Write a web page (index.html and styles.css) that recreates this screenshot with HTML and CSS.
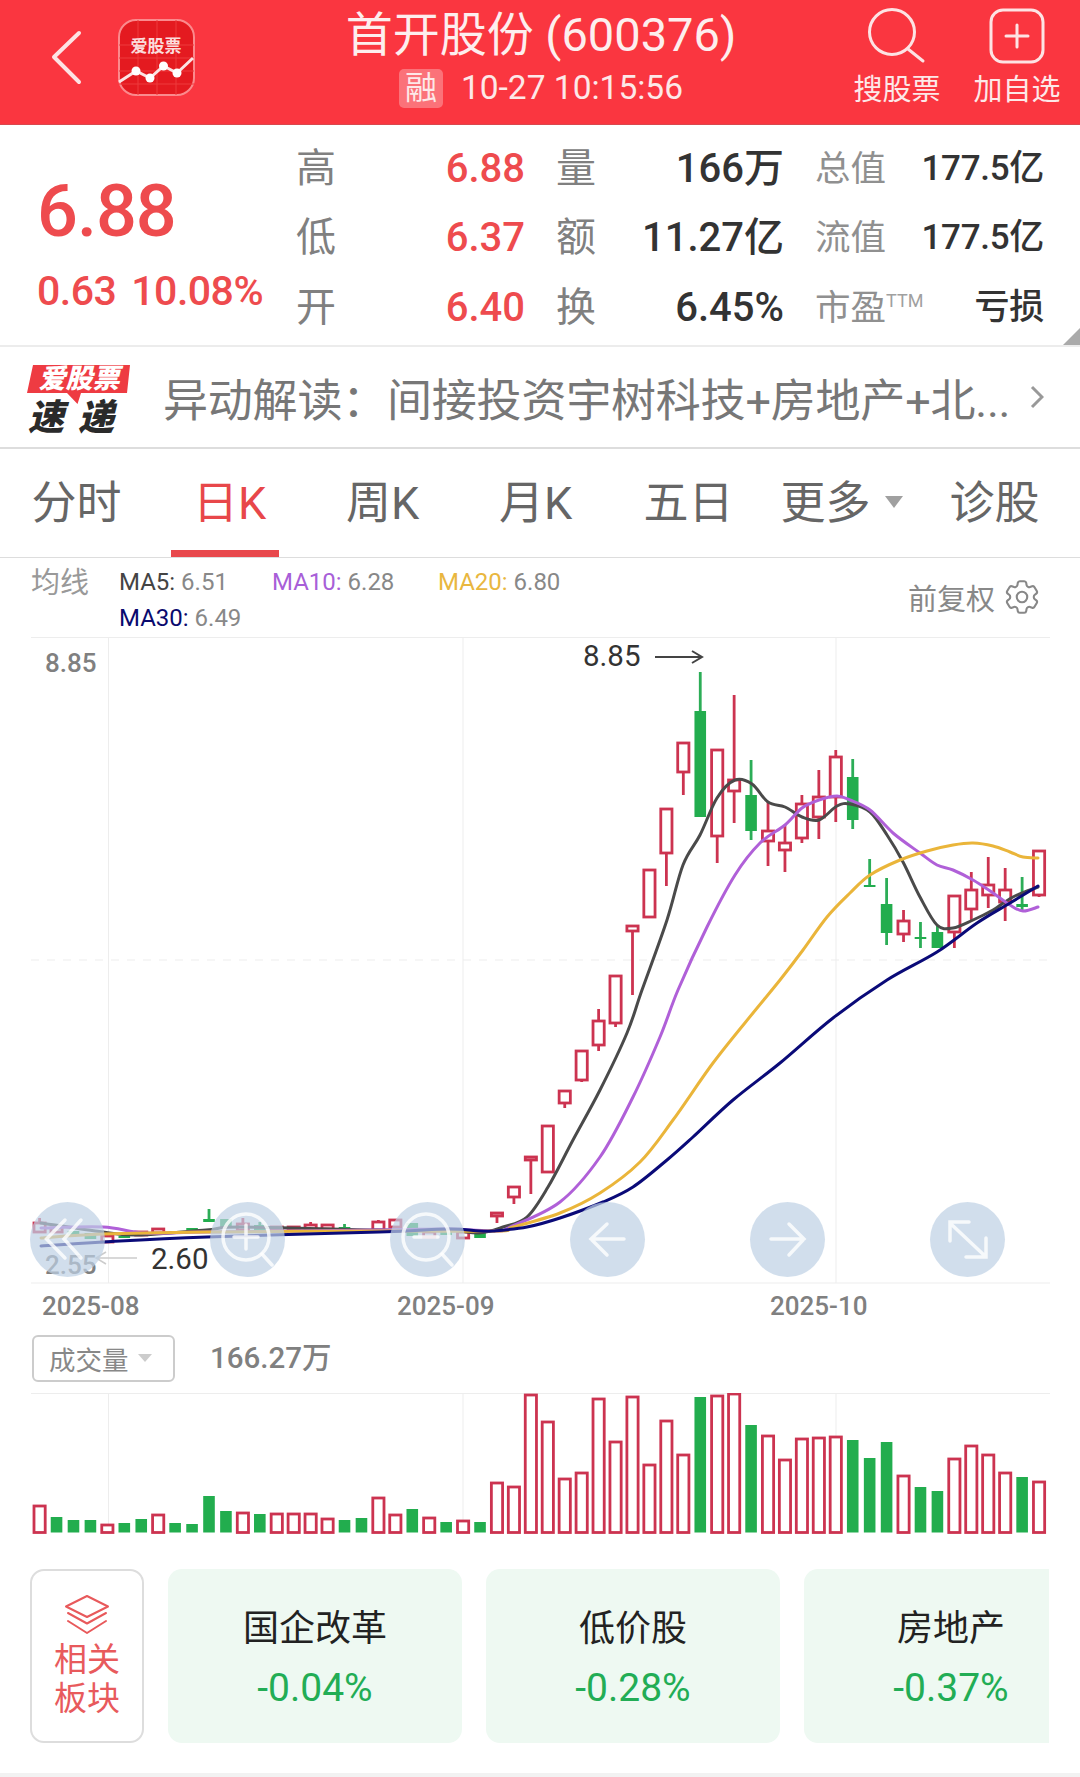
FILE: index.html
```html
<!DOCTYPE html>
<html lang="zh-CN">
<head>
    <meta charset="UTF-8">
    <meta name="viewport" content="width=device-width, initial-scale=1.0">
    <title>首开股份(600376)</title>
    <link rel="stylesheet" href="styles.css">
</head>
<body>
    <!-- Top bar -->
    <header class="topbar">
        <div class="topbar-left">
            <svg class="back-icon" viewBox="0 0 40 60"><path d="M32 5 L7 29 L32 54"/></svg>
            <svg class="app-logo" viewBox="118 19 77 77">
                <rect x="119" y="20" width="75" height="75" rx="17" class="app-logo-bg"/>
                <path d="M119 45H194M119 58H194M119 71H194M119 84H194M138 20V95M157 20V95M176 20V95" class="app-logo-grid"/>
                <text x="156" y="52" text-anchor="middle" class="app-logo-text">爱股票</text>
                <polyline points="119,82 136,71 150,78 163.5,66 177,73 193,58" class="app-logo-line"/>
                <circle cx="136" cy="71" r="4.5" fill="#fff"/>
                <circle cx="150" cy="78" r="4.5" fill="#fff"/>
                <circle cx="163.5" cy="66" r="4.5" fill="#fff"/>
                <circle cx="177" cy="73" r="4.5" fill="#fff"/>
            </svg>
        </div>
        <div class="topbar-title">
            <div class="stock-name">首开股份 (600376)</div>
            <div class="stock-time"><span class="rong-badge">融</span>10-27 10:15:56</div>
        </div>
        <div class="topbar-actions">
            <div class="action">
                <svg class="action-icon" viewBox="0 0 60 60"><circle cx="25" cy="26" r="22.5"/><path d="M41 43 L56 55"/></svg>
                <span>搜股票</span>
            </div>
            <div class="action">
                <svg class="action-icon" viewBox="0 0 60 60"><rect x="4" y="4" width="52" height="52" rx="12"/><path d="M30 19V41M19 30H41"/></svg>
                <span>加自选</span>
            </div>
        </div>
    </header>

    <!-- Quote -->
    <section class="quote">
        <div class="price-box">
            <div class="price">6.88</div>
            <div class="change"><span>0.63</span><span>10.08%</span></div>
        </div>
        <div class="stats">
            <div class="stat"><span class="stat-label">高</span><span class="stat-value up">6.88</span></div>
            <div class="stat"><span class="stat-label">量</span><span class="stat-value">166万</span></div>
            <div class="stat small"><span class="stat-label">总值</span><span class="stat-value">177.5亿</span></div>
            <div class="stat"><span class="stat-label">低</span><span class="stat-value up">6.37</span></div>
            <div class="stat"><span class="stat-label">额</span><span class="stat-value">11.27亿</span></div>
            <div class="stat small"><span class="stat-label">流值</span><span class="stat-value">177.5亿</span></div>
            <div class="stat"><span class="stat-label">开</span><span class="stat-value up">6.40</span></div>
            <div class="stat"><span class="stat-label">换</span><span class="stat-value">6.45%</span></div>
            <div class="stat small"><span class="stat-label">市盈<sup>TTM</sup></span><span class="stat-value">亏损</span></div>
        </div>
        <div class="corner"></div>
    </section>

    <!-- News -->
    <section class="news">
        <svg class="news-logo" viewBox="27 356 103 90">
            <polygon points="33,365 130,365 127,393 81,393 77.5,404 67,393 27,393" fill="#ee3b42"/>
            <text x="79" y="388" text-anchor="middle" class="news-logo-top">爱股票</text>
            <text x="28" y="430" class="news-logo-bottom">速</text>
            <text x="78" y="430" class="news-logo-bottom">递</text>
        </svg>
        <div class="news-text">异动解读<span class="news-colon">：</span>间接投资宇树科技+房地产+北...</div>
        <svg class="news-arrow" viewBox="0 0 14 24"><path d="M2 2 L12 12 L2 22"/></svg>
    </section>

    <!-- Period tabs -->
    <nav class="tabs">
        <div class="tab">分时</div>
        <div class="tab active">日K</div>
        <div class="tab">周K</div>
        <div class="tab">月K</div>
        <div class="tab">五日</div>
        <div class="tab">更多<span class="tab-caret"></span></div>
        <div class="tab">诊股</div>
    </nav>

    <!-- Moving averages -->
    <section class="ma-bar">
        <div class="ma-title">均线</div>
        <div class="ma-list">
            <div class="ma"><span class="ma5">MA5:</span> 6.51</div>
            <div class="ma"><span class="ma10">MA10:</span> 6.28</div>
            <div class="ma"><span class="ma20">MA20:</span> 6.80</div>
            <div class="ma"><span class="ma30">MA30:</span> 6.49</div>
        </div>
        <div class="adjust">
            <span>前复权</span>
            <svg class="gear" viewBox="0 0 24 24">
                <path d="M9.594 3.94c.09-.542.56-.94 1.11-.94h2.593c.55 0 1.02.398 1.11.94l.213 1.281c.063.374.313.686.645.87.074.04.147.083.22.127.325.196.72.257 1.075.124l1.217-.456a1.125 1.125 0 0 1 1.37.49l1.296 2.247a1.125 1.125 0 0 1-.26 1.431l-1.003.827c-.293.241-.438.613-.43.992a7.723 7.723 0 0 1 0 .255c-.008.378.137.75.43.991l1.004.827c.424.35.534.955.26 1.43l-1.298 2.247a1.125 1.125 0 0 1-1.369.491l-1.217-.456c-.355-.133-.75-.072-1.076.124a6.47 6.47 0 0 1-.22.128c-.331.183-.581.495-.644.869l-.213 1.281c-.09.543-.56.94-1.11.94h-2.594c-.55 0-1.019-.398-1.11-.94l-.213-1.281c-.062-.374-.312-.686-.644-.87a6.52 6.52 0 0 1-.22-.127c-.325-.196-.72-.257-1.076-.124l-1.217.456a1.125 1.125 0 0 1-1.369-.49l-1.297-2.247a1.125 1.125 0 0 1 .26-1.431l1.004-.827c.292-.24.437-.613.43-.991a6.932 6.932 0 0 1 0-.255c.007-.38-.138-.751-.43-.992l-1.004-.827a1.125 1.125 0 0 1-.26-1.43l1.297-2.247a1.125 1.125 0 0 1 1.37-.491l1.216.456c.356.133.751.072 1.076-.124.072-.044.146-.086.22-.128.332-.183.582-.495.644-.869l.214-1.28Z"/>
                <circle cx="12" cy="12" r="3"/>
            </svg>
        </div>
    </section>

    <!-- K line chart, viewBox uses page coordinates -->
    <svg class="kline" id="kline" viewBox="0 637 1080 690">
        <g class="grid-lines">
            <path d="M31 1283H1050M108.5 637V1283M463 637V1283M836 637V1283M31 637.5H1050"/>
            <path class="grid-dash" d="M31 960H1050"/>
        </g>
        <g id="candles"></g>
        <g id="maLines"></g>
        <text x="45" y="672" class="axis-price">8.85</text>
        <text x="45" y="1274" class="axis-price">2.55</text>
        <text x="583" y="666" class="mark-price">8.85</text>
        <path class="mark-arrow" d="M655 657H702M692 651L702 657L692 663"/>
        <text x="151" y="1269" class="mark-price">2.60</text>
        <path class="mark-arrow light" d="M137 1258H96M106 1252L96 1258L106 1264"/>

        <!-- Floating chart buttons -->
        <g class="chart-btn">
            <circle cx="67.5" cy="1239.5" r="37.5"/>
            <path d="M65 1220L46.5 1239L65 1258M81 1220L64 1239L81 1258"/>
        </g>
        <g class="chart-btn">
            <circle cx="247.5" cy="1239.5" r="37.5"/>
            <circle class="btn-line" cx="246" cy="1237" r="23"/>
            <path d="M262 1254L272 1265M234 1237H258M246 1225V1249"/>
        </g>
        <g class="chart-btn">
            <circle cx="427.5" cy="1239.5" r="37.5"/>
            <circle class="btn-line" cx="426" cy="1237" r="23"/>
            <path d="M442 1254L452 1265M414 1237H438"/>
        </g>
        <g class="chart-btn">
            <circle cx="607.5" cy="1239.5" r="37.5"/>
            <path d="M624 1239H591M607 1224L591 1239L607 1255"/>
        </g>
        <g class="chart-btn">
            <circle cx="787.5" cy="1239.5" r="37.5"/>
            <path d="M771 1239H804M789 1224L804 1239L789 1255"/>
        </g>
        <g class="chart-btn">
            <circle cx="967.5" cy="1239.5" r="37.5"/>
            <path d="M969 1222H950V1241M951 1224L985 1256M986 1238V1257H966"/>
        </g>

        <text x="42" y="1315" class="axis-date">2025-08</text>
        <text x="397" y="1315" class="axis-date">2025-09</text>
        <text x="770" y="1315" class="axis-date">2025-10</text>
    </svg>

    <!-- Volume -->
    <div class="vol-head">
        <div class="vol-select">成交量<span class="vol-caret"></span></div>
        <div class="vol-value">166.27万</div>
    </div>
    <svg class="volume" id="volume" viewBox="0 1393 1080 145">
        <g class="grid-lines"><path d="M31 1393.5H1050M108.5 1393V1533M463 1393V1533M836 1393V1533"/></g>
        <g id="volBars"></g>
    </svg>

    <!-- Related sectors -->
    <section class="sectors">
        <div class="sector-tag">
            <svg class="layers" viewBox="0 0 46 42">
                <path d="M23 2 L44 12.5 L23 23 L2 12.5 Z"/>
                <path d="M4 19 L23 29.5 L42 19"/>
                <path d="M4 27 L23 39 L42 27"/>
            </svg>
            <div>相关</div>
            <div>板块</div>
        </div>
        <div class="sector-card"><div class="sector-name">国企改革</div><div class="sector-pct">-0.04%</div></div>
        <div class="sector-card"><div class="sector-name">低价股</div><div class="sector-pct">-0.28%</div></div>
        <div class="sector-card"><div class="sector-name">房地产</div><div class="sector-pct">-0.37%</div></div>
    </section>
    <div class="page-end"></div>

    <script src="chart.js"></script>
</body>
</html>
```

FILE: styles.css
```css
* {
    box-sizing: border-box;
}
body {
    margin: 0;
    width: 1080px;
    background: #fff;
    font-family: Roboto, "Noto Sans CJK SC", sans-serif;
    color: #333;
}
svg {
    display: block;
}

/* Top bar */
.topbar {
    display: flex;
    height: 125px;
    background: #fa3640;
    border-bottom: 1px solid #d9484e;
    color: #fff;
}
.topbar-left {
    display: flex;
    align-items: center;
    width: 231px;
    padding-left: 47px;
}
.back-icon {
    width: 40px;
    height: 60px;
    margin-top: -9px;
}
.back-icon path {
    fill: none;
    stroke: #fde3e4;
    stroke-width: 4;
    stroke-linecap: round;
    stroke-linejoin: round;
}
.app-logo {
    width: 77px;
    height: 77px;
    margin-left: 31px;
    margin-top: -10px;
}
.app-logo-bg {
    fill: #e41a20;
    stroke: #fb8a8d;
    stroke-width: 2;
}
.app-logo-grid {
    stroke: #ee3a3d;
    stroke-width: 1;
}
.app-logo-text {
    font-size: 17px;
    font-weight: 700;
    fill: #fbdcdc;
}
.app-logo-line {
    fill: none;
    stroke: #fbe4e4;
    stroke-width: 3;
}
.topbar-title {
    width: 620px;
    text-align: center;
}
.stock-name {
    font-size: 47px;
    line-height: 54px;
    margin-top: 8px;
    color: #fdeeee;
}
.stock-time {
    display: flex;
    align-items: center;
    justify-content: center;
    font-size: 33.5px;
    line-height: 40px;
    margin-top: 6px;
    color: #fde8e8;
}
.rong-badge {
    width: 44px;
    height: 39px;
    line-height: 39px;
    margin-right: 18px;
    border-radius: 5px;
    background: rgba(255, 255, 255, 0.3);
    font-size: 32px;
}
.topbar-actions {
    display: flex;
    gap: 32px;
    padding-left: 2px;
}
.action {
    display: flex;
    flex-direction: column;
    align-items: center;
    width: 88px;
    font-size: 29px;
    color: #fde8e8;
}
.action span {
    line-height: 36px;
    margin-top: 6px;
}
.action-icon {
    width: 60px;
    height: 60px;
    margin-top: 6px;
}
.action-icon * {
    fill: none;
    stroke: #fde3e4;
    stroke-width: 3;
    stroke-linecap: round;
}

/* Quote */
.quote {
    position: relative;
    display: flex;
    height: 222px;
    border-bottom: 2px solid #ececec;
}
.price-box {
    width: 296px;
    padding-left: 37px;
    color: #ee4b4e;
}
.price {
    font-size: 72px;
    font-weight: 500;
    line-height: 84px;
    letter-spacing: -1px;
    margin-top: 45px;
}
.change {
    display: flex;
    gap: 15px;
    font-size: 41px;
    font-weight: 500;
    line-height: 48px;
    letter-spacing: -0.5px;
    margin-top: 13px;
}
.stats {
    display: grid;
    grid-template-columns: 229px 228px 229px;
    grid-auto-rows: 69.5px;
    column-gap: 31px;
    padding-top: 9px;
}
.stat {
    display: flex;
    align-items: center;
    justify-content: space-between;
    line-height: 50px;
}
.stat-label {
    font-size: 40px;
    color: #808080;
}
.stat-value {
    font-size: 40px;
    font-weight: 500;
}
.stat-value.up {
    color: #ee4b4e;
}
.stat.small .stat-label {
    font-size: 35.5px;
    color: #909090;
}
.stat.small .stat-value {
    font-size: 35px;
    letter-spacing: -0.3px;
}
.stat-label sup {
    font-size: 18px;
    line-height: 0;
    vertical-align: 13px;
    color: #a0a0a0;
}
.corner {
    position: absolute;
    right: 0;
    bottom: 0;
    width: 0;
    height: 0;
    border-left: 17px solid transparent;
    border-bottom: 17px solid #aaa;
}

/* News */
.news {
    display: flex;
    align-items: center;
    height: 102px;
    padding-left: 27px;
    border-bottom: 2px solid #ddd;
}
.news-logo {
    align-self: flex-start;
    width: 103px;
    height: 90px;
    margin-top: 9px;
}
.news-logo-top {
    font-size: 27px;
    font-weight: 900;
    font-style: italic;
    fill: #fff;
}
.news-logo-bottom {
    font-size: 36px;
    font-weight: 900;
    font-style: italic;
    fill: #2a2a2a;
}
.news-text {
    width: 860px;
    margin-left: 33px;
    font-size: 45px;
    letter-spacing: -0.2px;
    white-space: nowrap;
    color: #777;
}
.news-colon {
    font-family: "Noto Sans CJK TC", sans-serif;
}
.news-arrow {
    width: 14px;
    height: 24px;
    margin-left: 7px;
}
.news-arrow path {
    fill: none;
    stroke: #999;
    stroke-width: 3;
}

/* Tabs */
.tabs {
    display: grid;
    grid-template-columns: repeat(7, 153px);
    height: 109px;
    border-bottom: 1px solid #ddd;
}
.tab {
    position: relative;
    display: flex;
    align-items: center;
    justify-content: center;
    padding-bottom: 8px;
    font-size: 45px;
    color: #666;
}
.tab.active {
    color: #e8474a;
}
.tab.active::after {
    content: "";
    position: absolute;
    left: 18px;
    bottom: 0;
    width: 108px;
    height: 7px;
    background: #e8484c;
}
.tab-caret {
    width: 0;
    height: 0;
    margin-left: 14px;
    margin-top: 6px;
    border-left: 9px solid transparent;
    border-right: 9px solid transparent;
    border-top: 12px solid #a0a0a0;
}

/* Moving averages */
.ma-bar {
    display: flex;
    height: 79px;
    padding: 7px 37px 0 31px;
}
.ma-title {
    width: 88px;
    font-size: 29px;
    line-height: 36px;
    color: #999;
}
.ma-list {
    display: grid;
    grid-template-columns: 153px 166px auto;
    grid-auto-rows: 36px;
    font-size: 24px;
    line-height: 35px;
    color: #888;
}
.ma5 {
    color: #444;
}
.ma10 {
    color: #a85fd8;
}
.ma20 {
    color: #e9b73f;
}
.ma30 {
    color: #0a0a6e;
}
.adjust {
    display: flex;
    align-items: center;
    gap: 6px;
    height: 42px;
    margin: 11px 0 0 auto;
    font-size: 29px;
    color: #888;
}
.gear {
    width: 42px;
    height: 42px;
}
.gear * {
    fill: none;
    stroke: #888;
    stroke-width: 1.2;
}

/* K line chart */
.kline {
    width: 1080px;
    height: 690px;
}
.grid-lines path {
    fill: none;
    stroke: #ededed;
    stroke-width: 1;
}
.grid-lines .grid-dash {
    stroke-dasharray: 8 8;
}
.candle-up {
    fill: #fff;
    stroke: #cc3350;
    stroke-width: 2.8;
}
.candle-down {
    fill: #22ad4e;
    stroke: none;
}
.wick-up {
    stroke: #cc3350;
    stroke-width: 2.8;
}
.wick-down {
    stroke: #2cad57;
    stroke-width: 2.8;
}
.ma-line {
    fill: none;
    stroke-width: 3;
    stroke-linecap: round;
    stroke-linejoin: round;
}
.axis-price {
    font-size: 26px;
    font-weight: 500;
    fill: #808080;
}
.mark-price {
    font-size: 29.5px;
    fill: #333;
}
.mark-arrow {
    fill: none;
    stroke: #444;
    stroke-width: 2;
}
.mark-arrow.light {
    stroke: #ccc;
    stroke-width: 1.5;
}
.axis-date {
    font-size: 26px;
    font-weight: 500;
    fill: #808080;
}
.chart-btn circle {
    fill: rgba(190, 208, 228, 0.7);
}
.chart-btn path,
.chart-btn .btn-line {
    fill: none;
    stroke: rgba(255, 255, 255, 0.8);
    stroke-width: 3.5;
    stroke-linecap: round;
}

/* Volume */
.vol-head {
    display: flex;
    align-items: center;
    height: 66px;
    padding: 0 0 4px 32px;
}
.vol-select {
    display: flex;
    align-items: center;
    width: 143px;
    height: 47px;
    padding-left: 15px;
    border: 2px solid #ccc;
    border-radius: 6px;
    font-size: 26.5px;
    color: #888;
}
.vol-caret {
    width: 0;
    height: 0;
    margin-left: 9px;
    border-left: 7px solid transparent;
    border-right: 7px solid transparent;
    border-top: 8px solid #ccc;
}
.vol-value {
    margin-left: 35px;
    font-size: 29.5px;
    font-weight: 500;
    line-height: 40px;
    color: #808080;
}
.volume {
    width: 1080px;
    height: 145px;
}

/* Related sectors */
.sectors {
    display: flex;
    gap: 24px;
    width: 1049px;
    height: 174px;
    margin-top: 31px;
    padding-left: 30px;
    overflow: hidden;
}
.sector-tag {
    flex: none;
    display: flex;
    flex-direction: column;
    align-items: center;
    width: 114px;
    border: 2px solid #ddd;
    border-radius: 14px;
    font-size: 33px;
    line-height: 39px;
    color: #e85a5c;
}
.layers {
    width: 46px;
    height: 42px;
    margin: 23px 0 4px;
}
.layers path {
    fill: none;
    stroke: #e8595b;
    stroke-width: 2;
    stroke-linejoin: round;
    stroke-linecap: round;
}
.sector-card {
    flex: none;
    width: 294px;
    background: #eef9f2;
    border-radius: 14px;
    text-align: center;
}
.sector-name {
    margin-top: 36px;
    font-size: 36px;
    line-height: 48px;
    color: #222;
}
.sector-pct {
    margin-top: 10px;
    font-size: 39px;
    line-height: 50px;
    color: #22ad55;
}
.page-end {
    height: 4px;
    margin-top: 30px;
    background: #f2f2f2;
}
```

FILE: chart.js
```js
// Draws the candles, the moving averages and the volume bars into the svg groups
const SVG_NS = 'http://www.w3.org/2000/svg';
const FIRST_X = 39.6;
const STEP_X = 16.94;

// [direction, body top, body bottom, high, low]
const candles = [
    ['u', 1223, 1232, 1218, 1232], ['u', 1228, 1232, 1228, 1232], ['d', 1231, 1235, 1231, 1235], ['d', 1233, 1239, 1233, 1239],
    ['u', 1236, 1242, 1236, 1242], ['d', 1236, 1238, 1236, 1238], ['u', 1232, 1235, 1232, 1235], ['u', 1229, 1233, 1229, 1233],
    ['d', 1231, 1233, 1231, 1233], ['d', 1228, 1232, 1228, 1232], ['d', 1219, 1222, 1209, 1222], ['d', 1219, 1227, 1219, 1227],
    ['u', 1224, 1230, 1218, 1230], ['d', 1225, 1230, 1222, 1230], ['u', 1227, 1229, 1227, 1229], ['u', 1227, 1230, 1227, 1230],
    ['u', 1225, 1230, 1222, 1230], ['u', 1225, 1229, 1225, 1229], ['d', 1227, 1229, 1224, 1229], ['d', 1229, 1233, 1229, 1233],
    ['u', 1222, 1230, 1220, 1230], ['u', 1220, 1227, 1220, 1227], ['d', 1223, 1236, 1223, 1236], ['u', 1232, 1237, 1232, 1237],
    ['d', 1230, 1235, 1230, 1235], ['u', 1232, 1238, 1232, 1238], ['d', 1233, 1238, 1233, 1238], ['u', 1213, 1216, 1212, 1223],
    ['u', 1187, 1197, 1187, 1204], ['u', 1157, 1160, 1156, 1194], ['u', 1126, 1172, 1126, 1172], ['u', 1091, 1103, 1091, 1108],
    ['u', 1051, 1080, 1051, 1082], ['u', 1021, 1045, 1009, 1051], ['u', 976, 1023, 976, 1027], ['u', 926, 931, 926, 995],
    ['u', 870, 917, 870, 917], ['u', 809, 853, 809, 886], ['u', 743, 772, 743, 795], ['d', 711, 817, 672, 817],
    ['u', 750, 836, 750, 863], ['u', 780, 791, 695, 823], ['d', 795, 831, 760, 840], ['u', 831, 841, 802, 866],
    ['u', 843, 850, 825, 872], ['u', 804, 838, 795, 843], ['u', 797, 817, 770, 839], ['u', 757, 797, 750, 822],
    ['d', 777, 820, 759, 829], ['d', 885, 887, 859, 887], ['d', 904, 933, 878, 945], ['u', 921, 934, 910, 942],
    ['d', 937, 939, 922, 948], ['d', 932, 948, 925, 948], ['u', 896, 932, 896, 948], ['u', 890, 909, 872, 920],
    ['u', 885, 895, 857, 908], ['u', 890, 902, 868, 921], ['d', 904, 907, 877, 912], ['u', 851, 895, 851, 897]
];

const maLines = [
    {
        color: '#4a4a4a',
        points: [[41, 1223], [103, 1232], [138, 1235], [206, 1230], [241, 1227], [379, 1230], [448, 1230], [479, 1233], [503, 1227],
            [527, 1217], [548, 1187], [573, 1140], [600, 1090], [627, 1033], [642, 990], [667, 920], [683, 865], [700, 835], [717, 798],
            [735, 780], [752, 784], [768, 802], [785, 807], [802, 817], [819, 820], [837, 806], [850, 804], [870, 812], [887, 835],
            [903, 862], [920, 897], [937, 925], [953, 928], [973, 920], [993, 910], [1013, 897], [1038, 887]]
    },
    {
        color: '#b060d8',
        points: [[41, 1228], [103, 1227], [145, 1233], [207, 1232], [379, 1230], [448, 1229], [496, 1231], [510, 1227], [560, 1202],
            [600, 1157], [633, 1097], [660, 1037], [678, 990], [707, 927], [735, 875], [760, 843], [785, 825], [802, 808], [819, 800],
            [837, 796], [850, 800], [870, 810], [893, 833], [920, 853], [937, 865], [953, 870], [973, 880], [993, 893], [1010, 905],
            [1023, 911], [1038, 907]]
    },
    {
        color: '#eab53a',
        points: [[41, 1238], [103, 1234], [207, 1232], [379, 1231], [496, 1231], [513, 1227], [560, 1213], [600, 1193], [640, 1162],
            [673, 1120], [713, 1063], [753, 1013], [780, 980], [803, 950], [827, 917], [850, 893], [870, 875], [900, 860], [927, 851],
            [953, 845], [973, 843], [993, 846], [1010, 852], [1023, 857], [1038, 858]]
    },
    {
        color: '#0a0a78',
        points: [[41, 1246], [103, 1242], [207, 1237], [379, 1232], [448, 1229], [479, 1231], [493, 1231], [527, 1227], [560, 1218],
            [603, 1202], [633, 1187], [667, 1160], [693, 1137], [733, 1100], [780, 1063], [833, 1018], [887, 980], [937, 952], [977, 923],
            [1010, 903], [1038, 886]]
    }
];

// [direction, top of the bar]
const volumes = [
    ['u', 1506], ['d', 1517], ['d', 1520], ['d', 1520], ['u', 1525], ['d', 1523], ['d', 1519], ['u', 1515], ['d', 1523], ['d', 1524],
    ['d', 1496], ['d', 1511], ['u', 1513], ['d', 1514], ['u', 1514], ['u', 1514], ['u', 1514], ['u', 1519], ['d', 1520], ['d', 1518],
    ['u', 1498], ['u', 1515], ['d', 1509], ['u', 1518], ['d', 1522], ['u', 1521], ['d', 1522], ['u', 1483], ['u', 1487], ['u', 1395],
    ['u', 1422], ['u', 1479], ['u', 1473], ['u', 1399], ['u', 1442], ['u', 1397], ['u', 1465], ['u', 1421], ['u', 1455], ['d', 1397],
    ['u', 1396], ['u', 1394], ['d', 1425], ['u', 1436], ['u', 1460], ['u', 1439], ['u', 1438], ['u', 1437], ['d', 1440], ['d', 1458],
    ['d', 1442], ['u', 1476], ['d', 1487], ['d', 1491], ['u', 1459], ['u', 1446], ['u', 1455], ['u', 1473], ['d', 1477], ['u', 1482]
];
const VOLUME_BOTTOM = 1532.5;

function addShape(parent, tag, attrs) {
    const el = document.createElementNS(SVG_NS, tag);
    Object.keys(attrs).forEach(key => el.setAttribute(key, attrs[key]));
    parent.appendChild(el);
    return el;
}

function drawBody(parent, dir, x, top, bottom) {
    if (dir === 'u') {
        addShape(parent, 'rect', { class: 'candle-up', x: x - 5.6, y: top, width: 11.2, height: bottom - top });
    } else {
        addShape(parent, 'rect', { class: 'candle-down', x: x - 5.8, y: top, width: 11.6, height: bottom - top });
    }
}

function drawCandles() {
    const group = document.getElementById('candles');
    candles.forEach((c, i) => {
        const x = FIRST_X + STEP_X * i;
        const wick = c[0] === 'u' ? 'wick-up' : 'wick-down';
        addShape(group, 'line', { class: wick, x1: x, x2: x, y1: c[3], y2: c[4] });
        drawBody(group, c[0], x, c[1], c[2]);
    });
}

// Catmull-Rom curve through the points, so the lines stay smooth
function smoothPath(points) {
    let d = `M${points[0][0]} ${points[0][1]}`;
    for (let i = 0; i < points.length - 1; i++) {
        const p0 = points[i - 1] || points[i];
        const p1 = points[i];
        const p2 = points[i + 1];
        const p3 = points[i + 2] || p2;
        const c1x = p1[0] + (p2[0] - p0[0]) / 6;
        const c1y = p1[1] + (p2[1] - p0[1]) / 6;
        const c2x = p2[0] - (p3[0] - p1[0]) / 6;
        const c2y = p2[1] - (p3[1] - p1[1]) / 6;
        d += ` C${c1x.toFixed(1)} ${c1y.toFixed(1)} ${c2x.toFixed(1)} ${c2y.toFixed(1)} ${p2[0]} ${p2[1]}`;
    }
    return d;
}

function drawMaLines() {
    const group = document.getElementById('maLines');
    maLines.forEach(line => {
        addShape(group, 'path', { class: 'ma-line', stroke: line.color, d: smoothPath(line.points) });
    });
}

function drawVolumes() {
    const group = document.getElementById('volBars');
    volumes.forEach((v, i) => {
        drawBody(group, v[0], FIRST_X + STEP_X * i, v[1], VOLUME_BOTTOM);
    });
}

drawCandles();
drawMaLines();
drawVolumes();
```
